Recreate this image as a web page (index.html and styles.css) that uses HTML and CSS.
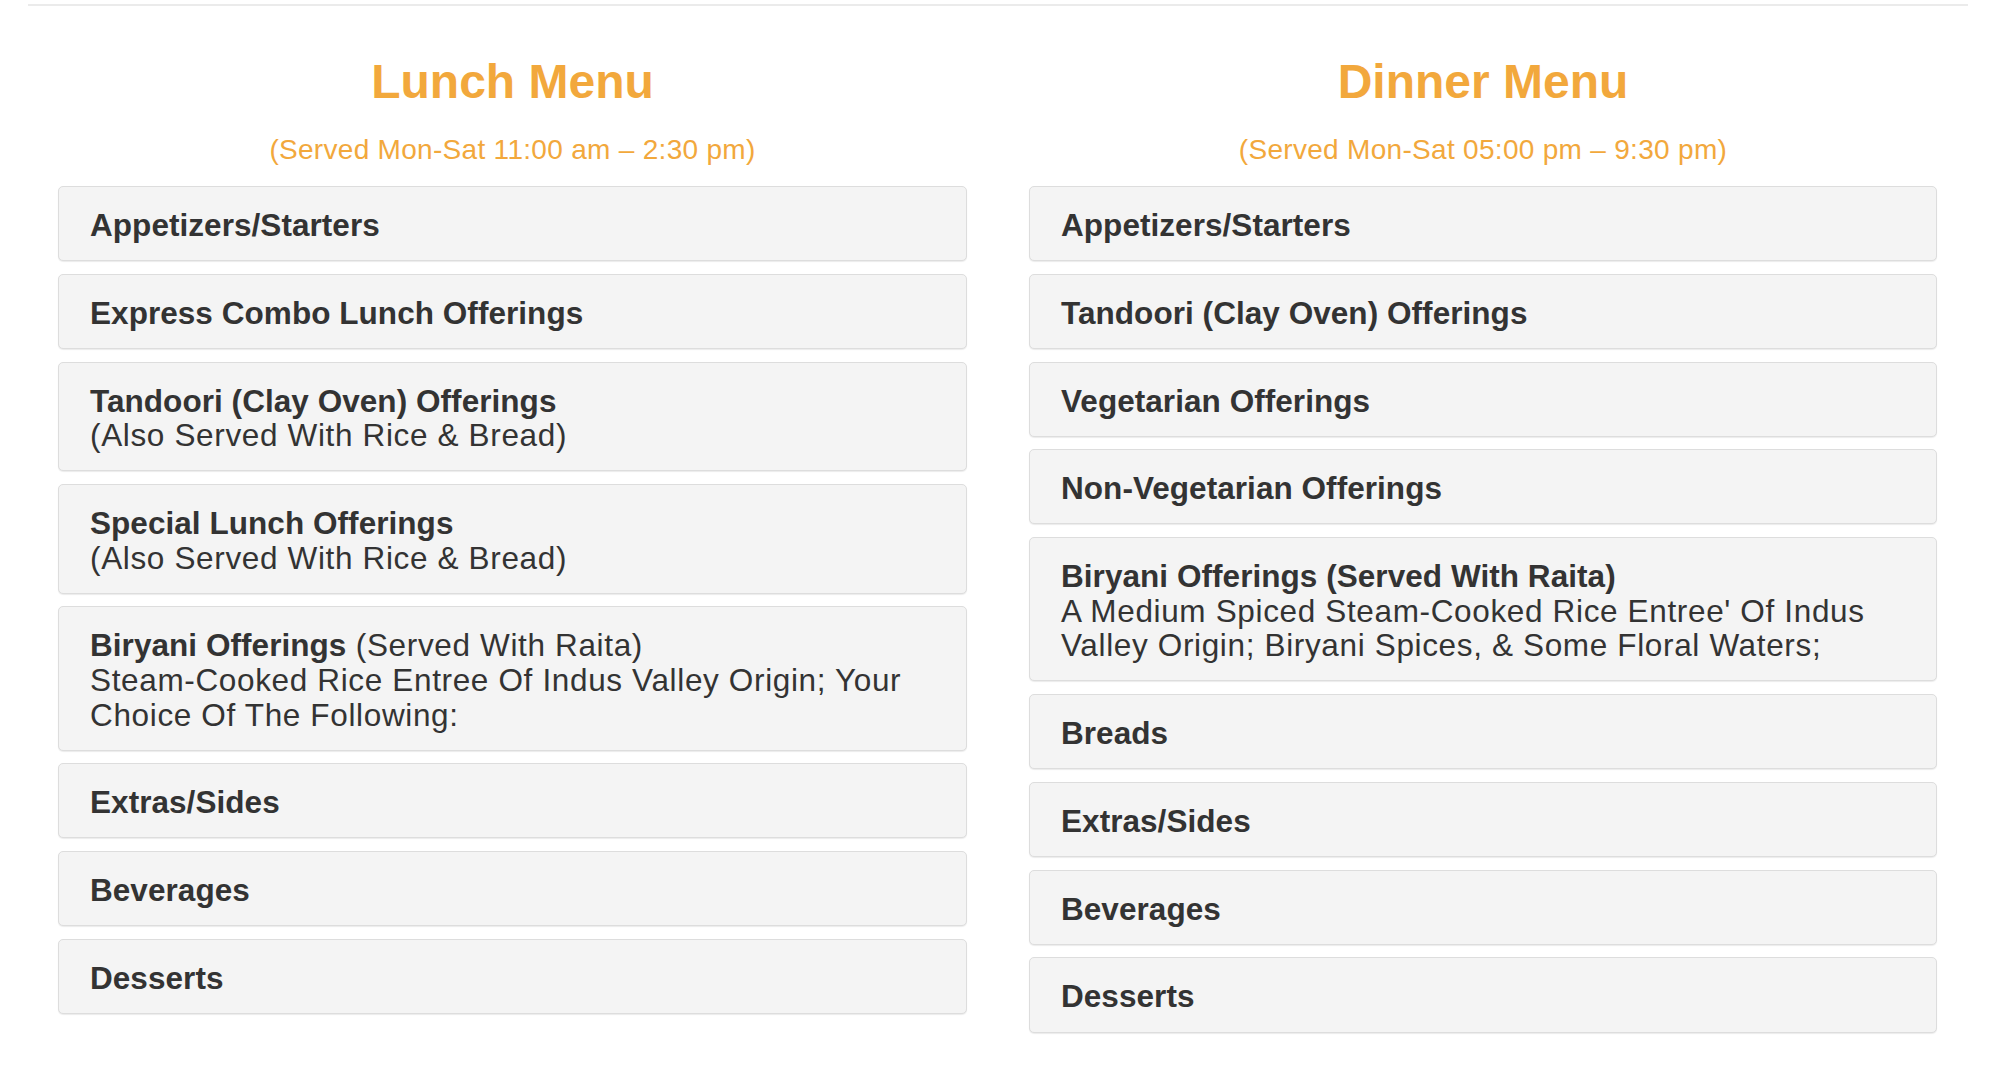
FILE: index.html
```html
<!DOCTYPE html>
<html lang="en">
<head>
<meta charset="utf-8">
<title>Menu</title>
<link rel="stylesheet" href="styles.css">
</head>
<body>
<div class="page">
  <div class="rule"></div>
  <div class="menus">
    <section class="menu">
      <h2 class="menu-title">Lunch Menu</h2>
      <p class="menu-hours">(Served Mon-Sat 11:00 am – 2:30 pm)</p>
      <div class="card"><span class="strong">Appetizers/Starters</span></div>
      <div class="card"><span class="strong">Express Combo Lunch Offerings</span></div>
      <div class="card"><span class="strong">Tandoori (Clay Oven) Offerings</span><br>(Also Served With Rice &amp; Bread)</div>
      <div class="card"><span class="strong">Special Lunch Offerings</span><br>(Also Served With Rice &amp; Bread)</div>
      <div class="card"><span class="strong">Biryani Offerings</span> (Served With Raita)<br>Steam-Cooked Rice Entree Of Indus Valley Origin; Your Choice Of The Following:</div>
      <div class="card"><span class="strong">Extras/Sides</span></div>
      <div class="card"><span class="strong">Beverages</span></div>
      <div class="card"><span class="strong">Desserts</span></div>
    </section>
    <section class="menu">
      <h2 class="menu-title">Dinner Menu</h2>
      <p class="menu-hours">(Served Mon-Sat 05:00 pm – 9:30 pm)</p>
      <div class="card"><span class="strong">Appetizers/Starters</span></div>
      <div class="card"><span class="strong">Tandoori (Clay Oven) Offerings</span></div>
      <div class="card"><span class="strong">Vegetarian Offerings</span></div>
      <div class="card"><span class="strong">Non-Vegetarian Offerings</span></div>
      <div class="card"><span class="strong">Biryani Offerings (Served With Raita)</span><br>A Medium Spiced Steam-Cooked Rice Entree' Of Indus Valley Origin; Biryani Spices, &amp; Some Floral Waters;</div>
      <div class="card"><span class="strong">Breads</span></div>
      <div class="card"><span class="strong">Extras/Sides</span></div>
      <div class="card"><span class="strong">Beverages</span></div>
      <div class="card"><span class="strong">Desserts</span></div>
    </section>
  </div>
</div>
</body>
</html>
```

FILE: styles.css
```css
html, body {
  margin: 0;
  padding: 0;
  background: #ffffff;
}

body {
  font-family: "Liberation Sans", Arial, Helvetica, sans-serif;
  color: #333333;
}

.page {
  width: 1940px;
  margin-left: 28px;
  padding-top: 4px;
}

.rule {
  height: 2px;
  background: #ebebeb;
}

.menus {
  display: grid;
  grid-template-columns: 970px 970px;
}

.menu {
  padding: 0 31px 0 30px;
}

.menu + .menu {
  padding: 0 31px 0 31px;
}

.menu-title {
  margin: 49px 0 0;
  text-align: center;
  font-size: 48px;
  line-height: 53px;
  font-weight: bold;
  color: #f2a83c;
}

.menu-hours {
  margin: 25px 0 0;
  text-align: center;
  font-size: 28px;
  line-height: 34px;
  letter-spacing: 0.3px;
  color: #f2a83c;
}

.menu-hours + .card {
  margin-top: 19px;
}

.card {
  background: #f4f4f4;
  border: 1px solid #dddddd;
  border-radius: 5px;
  box-shadow: 0 1px 1px rgba(0, 0, 0, 0.08);
  padding: 21px 31px 17.5px;
  margin-bottom: 12.7px;
  font-size: 31.5px;
  line-height: 34.6px;
  letter-spacing: 0.65px;
  color: #333333;
}

.strong {
  font-weight: bold;
  letter-spacing: 0.05px;
}
```
